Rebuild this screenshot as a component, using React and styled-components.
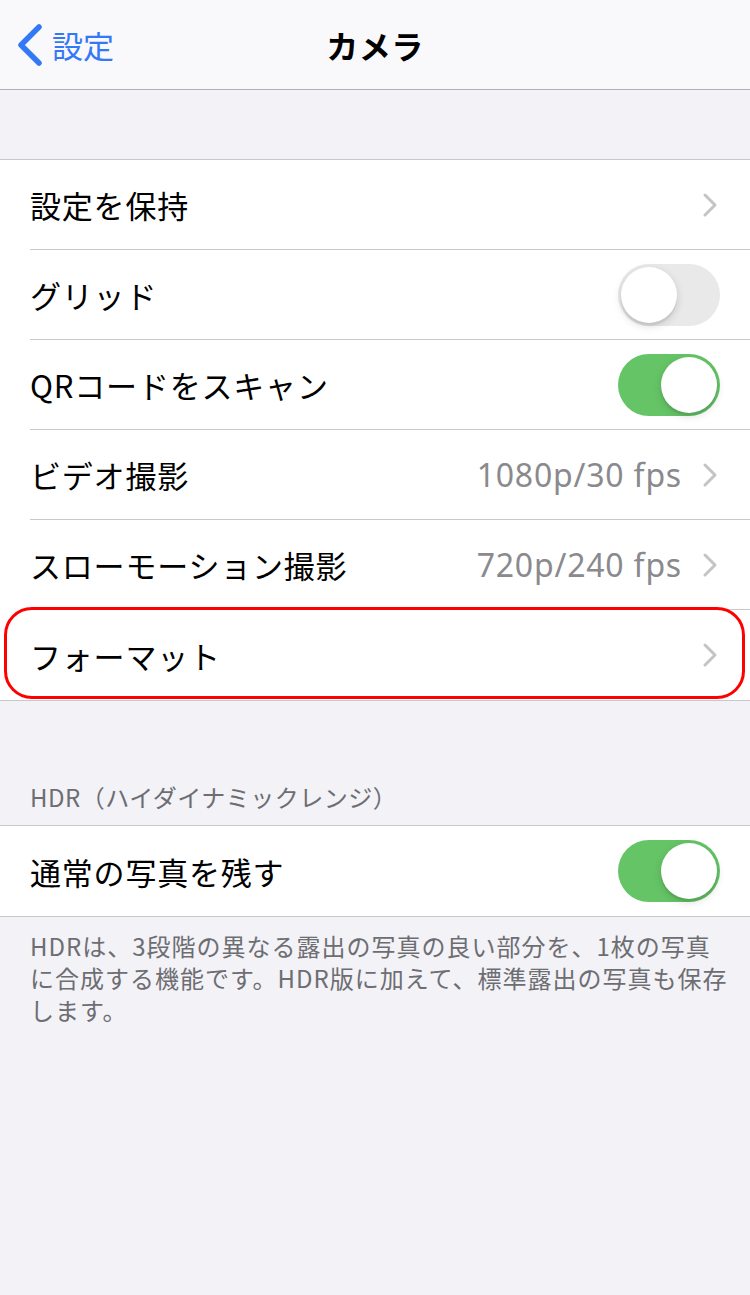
import React from 'react';
import styled, { createGlobalStyle } from 'styled-components';

const GlobalStyle = createGlobalStyle`
  html, body {
    margin: 0;
    padding: 0;
    background: #f2f2f7;
  }
  body {
    font-family: 'Noto Sans CJK JP', 'Noto Sans', sans-serif;
    -webkit-font-smoothing: antialiased;
  }
`;

const Page = styled.div`
  width: 750px;
  min-height: 1295px;
  background: #f2f2f7;
`;

const NavBar = styled.header`
  height: 89px;
  background: #f9f9fb;
  border-bottom: 1px solid #b1b1b4;
  display: grid;
  grid-template-columns: 1fr auto 1fr;
  align-items: center;
`;

const BackButton = styled.div`
  display: flex;
  align-items: center;
  gap: 9px;
  padding-left: 17px;
  color: #3478f6;
  font-size: 31px;
  & svg {
    display: block;
  }
`;

const Title = styled.h1`
  margin: 0;
  font-size: 32px;
  font-weight: 700;
  color: #000;
  letter-spacing: 0.5px;
`;

const Spacer = styled.div`
  height: 69px;
`;

const Group = styled.section`
  background: #fff;
  border-top: 1px solid #c8c7cc;
  border-bottom: 1px solid #c8c7cc;
`;

const Row = styled.div`
  position: relative;
  height: 90px;
  padding-left: 30px;
  display: flex;
  align-items: center;
  &:last-child > div {
    border-bottom: none;
    height: 89px;
  }
  ${({ $highlight }) => $highlight && `
    &::after {
      content: '';
      position: absolute;
      top: -3px;
      left: 4px;
      right: 5px;
      bottom: 1px;
      border: 3px solid #ff0000;
      border-radius: 28px;
      pointer-events: none;
    }
  `}
`;

const RowInner = styled.div`
  flex: 1;
  height: 89px;
  border-bottom: 1px solid #c8c7cc;
  display: flex;
  align-items: center;
  justify-content: space-between;
  padding-right: 30px;
`;

const Label = styled.span`
  font-size: 31px;
  color: #000;
  letter-spacing: 0.8px;
`;

const Trailing = styled.div`
  display: flex;
  align-items: center;
  gap: 20px;
`;

const Value = styled.span`
  font-size: 32px;
  color: #8a8a8e;
  letter-spacing: 0.8px;
  font-family: 'Noto Sans', 'Noto Sans CJK JP', sans-serif;
`;

const ChevronBox = styled.span`
  display: flex;
  margin-right: 2px;
`;

const SwitchTrack = styled.div`
  position: relative;
  width: 102px;
  height: 62px;
  border-radius: 31px;
  background: ${({ $on }) => ($on ? '#65c466' : '#e9e9ea')};
`;

const SwitchKnob = styled.div`
  position: absolute;
  top: 3px;
  left: ${({ $on }) => ($on ? '43px' : '3px')};
  width: 56px;
  height: 56px;
  border-radius: 50%;
  background: #fff;
  box-shadow: 0 3px 8px rgba(0, 0, 0, 0.15), 0 3px 1px rgba(0, 0, 0, 0.06);
`;

const SectionHeader = styled.div`
  padding: 80px 30px 12px;
  font-size: 24px;
  line-height: 32px;
  color: #6d6d72;
  letter-spacing: 0.5px;
`;

const Footer = styled.p`
  margin: 0;
  padding: 13px 16px 0 30px;
  font-size: 24px;
  line-height: 32px;
  color: #6d6d72;
  letter-spacing: 1px;
`;

function Chevron() {
  return (
    <ChevronBox>
      <svg width="16" height="26" viewBox="0 0 16 26">
        <polyline points="3,3 13,13 3,23" fill="none" stroke="#c4c4c7" strokeWidth="3" strokeLinecap="round" strokeLinejoin="round" />
      </svg>
    </ChevronBox>
  );
}

function Switch({ on }) {
  return (
    <SwitchTrack $on={on}>
      <SwitchKnob $on={on} />
    </SwitchTrack>
  );
}

function SettingRow({ label, value, chevron, toggle, highlight }) {
  return (
    <Row $highlight={highlight}>
      <RowInner>
        <Label>{label}</Label>
        <Trailing>
          {value && <Value>{value}</Value>}
          {chevron && <Chevron />}
          {toggle !== undefined && <Switch on={toggle} />}
        </Trailing>
      </RowInner>
    </Row>
  );
}

export default function App() {
  return (
    <Page>
      <GlobalStyle />
      <NavBar>
        <BackButton>
          <svg width="26" height="44" viewBox="0 0 26 44">
            <polyline points="22,4 4,22 22,40" fill="none" stroke="#3478f6" strokeWidth="5.5" strokeLinecap="round" strokeLinejoin="round" />
          </svg>
          <span>設定</span>
        </BackButton>
        <Title>カメラ</Title>
        <div />
      </NavBar>
      <Spacer />
      <Group>
        <SettingRow label="設定を保持" chevron />
        <SettingRow label="グリッド" toggle={false} />
        <SettingRow label="QRコードをスキャン" toggle />
        <SettingRow label="ビデオ撮影" value="1080p/30 fps" chevron />
        <SettingRow label="スローモーション撮影" value="720p/240 fps" chevron />
        <SettingRow label="フォーマット" chevron highlight />
      </Group>
      <SectionHeader>HDR（ハイダイナミックレンジ）</SectionHeader>
      <Group>
        <SettingRow label="通常の写真を残す" toggle />
      </Group>
      <Footer>
        HDRは、3段階の異なる露出の写真の良い部分を、1枚の写真<br />
        に合成する機能です。HDR版に加えて、標準露出の写真も保存<br />
        します。
      </Footer>
    </Page>
  );
}
